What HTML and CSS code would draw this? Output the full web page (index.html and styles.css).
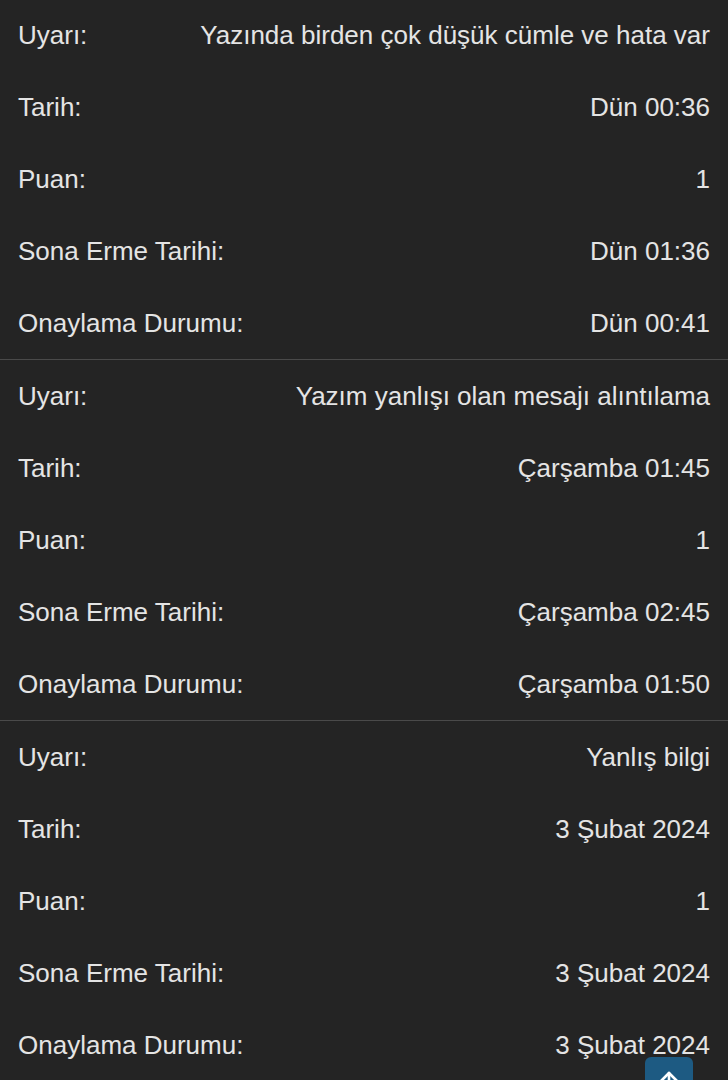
FILE: index.html
```html
<!DOCTYPE html>
<html lang="tr">
<head>
  <meta charset="UTF-8">
  <title>Uyarılar</title>
  <meta name="viewport" content="width=device-width, initial-scale=1.0">
  <link rel="stylesheet" href="styles.css">
</head>
<body>

  <!-- Uyarı listesi -->
  <div class="warnings">
    <div class="warning">
      <div class="row"><span class="label">Uyarı:</span><span class="value">Yazında birden çok düşük cümle ve hata var</span></div>
      <div class="row"><span class="label">Tarih:</span><span class="value">Dün 00:36</span></div>
      <div class="row"><span class="label">Puan:</span><span class="value">1</span></div>
      <div class="row"><span class="label">Sona Erme Tarihi:</span><span class="value">Dün 01:36</span></div>
      <div class="row"><span class="label">Onaylama Durumu:</span><span class="value">Dün 00:41</span></div>
    </div>
    <div class="warning">
      <div class="row"><span class="label">Uyarı:</span><span class="value">Yazım yanlışı olan mesajı alıntılama</span></div>
      <div class="row"><span class="label">Tarih:</span><span class="value">Çarşamba 01:45</span></div>
      <div class="row"><span class="label">Puan:</span><span class="value">1</span></div>
      <div class="row"><span class="label">Sona Erme Tarihi:</span><span class="value">Çarşamba 02:45</span></div>
      <div class="row"><span class="label">Onaylama Durumu:</span><span class="value">Çarşamba 01:50</span></div>
    </div>
    <div class="warning">
      <div class="row"><span class="label">Uyarı:</span><span class="value">Yanlış bilgi</span></div>
      <div class="row"><span class="label">Tarih:</span><span class="value">3 Şubat 2024</span></div>
      <div class="row"><span class="label">Puan:</span><span class="value">1</span></div>
      <div class="row"><span class="label">Sona Erme Tarihi:</span><span class="value">3 Şubat 2024</span></div>
      <div class="row"><span class="label">Onaylama Durumu:</span><span class="value">3 Şubat 2024</span></div>
    </div>
  </div>

  <!-- Yukarı çık -->
  <button class="to-top" aria-label="Yukarı">
    <svg width="26" height="26" viewBox="0 0 26 26" fill="none" stroke="#fff" stroke-width="2.6" stroke-linecap="round" stroke-linejoin="round">
      <path d="M13 24V3"/>
      <path d="M3.5 12.5L13 3l9.5 9.5"/>
    </svg>
  </button>

</body>
</html>
```

FILE: styles.css
```css
body {
  font-family: "Liberation Sans", Arial, sans-serif;
  background: #242424;
  color: #e4e4e4;
  margin: 0;
  padding: 0;
  overflow: hidden;
}

.warnings {
  margin-top: -1px;
}

.warning {
  border-bottom: 1px solid #4a4a4a;
}

.row {
  display: flex;
  justify-content: space-between;
  align-items: center;
  height: 72px;
  padding: 0 18px;
  font-size: 26px;
}

.value {
  text-align: right;
}

.to-top {
  position: fixed;
  left: 645px;
  top: 1057px;
  width: 48px;
  height: 48px;
  border: none;
  border-radius: 6px;
  background: #1d5a82;
  display: flex;
  justify-content: center;
  padding: 13px 0 0;
}
```
